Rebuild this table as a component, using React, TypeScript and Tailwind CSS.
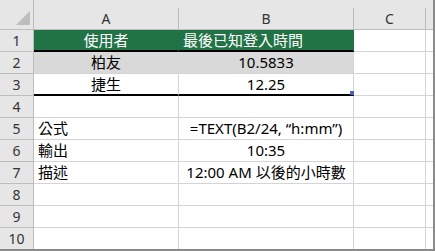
import React from "react";

type Row = {
  n: number;
  a?: string;
  b?: string;
  kind?: "head" | "gray" | "black" | "plain";
  aLeft?: boolean;
  bLeft?: boolean;
  handle?: boolean;
};

const rows: Row[] = [
  { n: 1, a: "使用者", b: "最後已知登入時間", kind: "head", bLeft: true },
  { n: 2, a: "柏友", b: "10.5833", kind: "gray" },
  { n: 3, a: "捷生", b: "12.25", kind: "black", handle: true },
  { n: 4 },
  { n: 5, a: "公式", b: "=TEXT(B2/24, “h:mm”)", aLeft: true },
  { n: 6, a: "輸出", b: "10:35", aLeft: true },
  { n: 7, a: "描述", b: "12:00 AM 以後的小時數", aLeft: true },
  { n: 8 },
  { n: 9 },
  { n: 10 },
];

const font = {
  fontFamily: '"Noto Sans", "Noto Sans CJK TC", sans-serif',
};

export default function App() {
  return (
    <div
      className="w-[435px] h-[251px] overflow-hidden bg-white border-r-2 border-b-2 border-[#8a8a8a] flex flex-col text-[15px] text-black"
      style={font}
    >
      {/* column headers */}
      <div className="flex h-[30px] shrink-0 bg-[#e6e6e6] border-b border-[#bdbdbd]">
        <div className="w-[34px] shrink-0 relative border-r border-[#bdbdbd]">
          <svg className="absolute left-0 top-0" width="34" height="29" viewBox="0 0 34 29">
            <polygon points="16,25 30,25 30,11" fill="#bdbdbd" />
          </svg>
        </div>
        {[
          { l: "A", w: "w-[145px]" },
          { l: "B", w: "w-[175px]" },
          { l: "C", w: "w-[72px]" },
        ].map((c) => (
          <div key={c.l} className={`${c.w} shrink-0 flex flex-col pt-[8px]`}>
            <div className="flex-1 border-r border-[#bdbdbd] flex items-center justify-center text-[14px] text-[#333] leading-none">
              {c.l}
            </div>
          </div>
        ))}
        <div className="flex-1" />
      </div>

      {rows.map((r) => {
        const isHead = r.kind === "head";
        const isGray = r.kind === "gray";
        const blackBottom = isHead || r.kind === "black";
        const abBorderB = blackBottom ? "border-b-2 border-b-black" : "border-b border-b-[#d4d4d4]";
        const bg = isHead ? "bg-[#217346] text-white" : isGray ? "bg-[#d9d9d9]" : "bg-white";
        const aRight = isHead ? "border-r-[#217346]" : isGray ? "border-r-[#d9d9d9]" : "border-r-[#d4d4d4]";
        const bRight = isHead ? "border-r-[#217346]" : "border-r-[#d4d4d4]";
        return (
          <div key={r.n} className="flex h-[22px] shrink-0">
            <div className="w-[34px] shrink-0 bg-[#e6e6e6] border-r border-b border-[#bdbdbd] flex items-center justify-center text-[14px] text-[#333] leading-none">
              {r.n}
            </div>
            <div
              className={`w-[145px] shrink-0 border-r ${aRight} ${abBorderB} ${bg} flex items-center leading-none whitespace-nowrap ${
                r.aLeft ? "justify-start pl-[4px]" : "justify-center"
              }`}
            >
              {r.a}
            </div>
            <div
              className={`w-[175px] shrink-0 relative border-r ${bRight} ${abBorderB} ${bg} flex items-center leading-none whitespace-nowrap ${
                r.bLeft ? "justify-start pl-[4px]" : "justify-center"
              }`}
            >
              {r.b}
              {r.handle && (
                <div className="absolute right-[-1px] bottom-[-1px] w-[4px] h-[4px] bg-[#4d5fc9]" />
              )}
            </div>
            <div className="w-[72px] shrink-0 border-r border-b border-[#d4d4d4]" />
            <div className="flex-1 border-b border-[#d4d4d4]" />
          </div>
        );
      })}
    </div>
  );
}
